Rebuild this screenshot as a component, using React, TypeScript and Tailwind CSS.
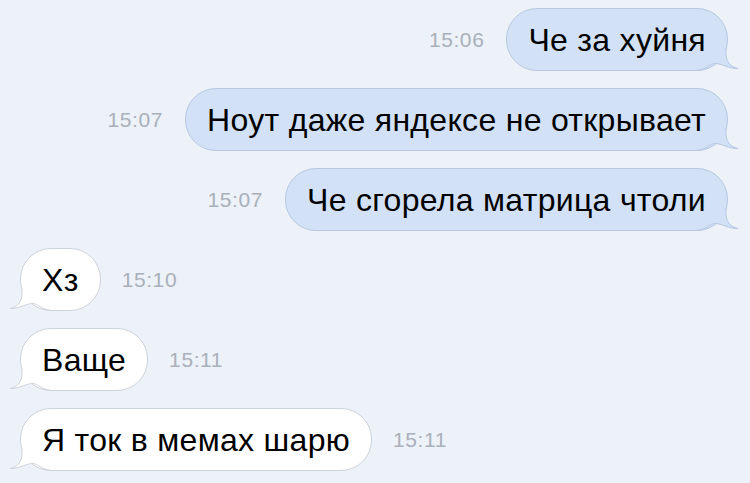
type Msg = { text: string; time: string; out: boolean };

const messages: Msg[] = [
  { text: "Че за хуйня", time: "15:06", out: true },
  { text: "Ноут даже яндексе не открывает", time: "15:07", out: true },
  { text: "Че сгорела матрица чтоли", time: "15:07", out: true },
  { text: "Хз", time: "15:10", out: false },
  { text: "Ваще", time: "15:11", out: false },
  { text: "Я ток в мемах шарю", time: "15:11", out: false },
];

function Tail({ out }: { out: boolean }) {
  const fill = out ? "#d2e1f6" : "#ffffff";
  const stroke = out ? "#b7c8e0" : "#cdd3dc";
  return (
    <svg
      width="42"
      height="23"
      viewBox="0 0 42 23"
      className={
        out
          ? "absolute right-[-13px] bottom-[-1px]"
          : "absolute left-[-13px] bottom-[-1px] -scale-x-100"
      }
    >
      <path
        d="M0,0 H28 V6 C28,13 32,19 40,20.5 C32,21 22,15 17,15.5 C12,16 8,21.5 0,22 Z"
        fill={fill}
      />
      <path
        d="M28,0 V6 C28,13 32,19 40,20.5 C32,21 22,15 17,15.5 C12,16 8,21.5 0,22"
        fill="none"
        stroke={stroke}
        strokeWidth="1"
      />
    </svg>
  );
}

function Time({ value }: { value: string }) {
  return (
    <span className="text-[21px] tracking-[0.6px] text-[#a9b0bb] leading-none">{value}</span>
  );
}

export default function App() {
  return (
    <div className="w-[750px] h-[483px] bg-[#edf1f8] overflow-hidden font-['Liberation_Sans',Arial,sans-serif] pt-[8px] flex flex-col gap-[17px]">
      {messages.map((m, i) => (
        <div
          key={i}
          className={
            m.out
              ? "flex items-center justify-end gap-[22px] pr-[22px]"
              : "flex items-center justify-start gap-[21px] pl-[20px]"
          }
        >
          {m.out && <Time value={m.time} />}
          <div
            className={
              m.out
                ? "relative h-[63px] px-[21px] flex items-center rounded-[31px] border border-[#b7c8e0] bg-[#d2e1f6]"
                : "relative h-[63px] px-[21px] flex items-center rounded-[31px] border border-[#cdd3dc] bg-white"
            }
          >
            <span className="relative z-10 text-[32px] tracking-[0.3px] text-black leading-none">
              {m.text}
            </span>
            <Tail out={m.out} />
          </div>
          {!m.out && <Time value={m.time} />}
        </div>
      ))}
    </div>
  );
}
